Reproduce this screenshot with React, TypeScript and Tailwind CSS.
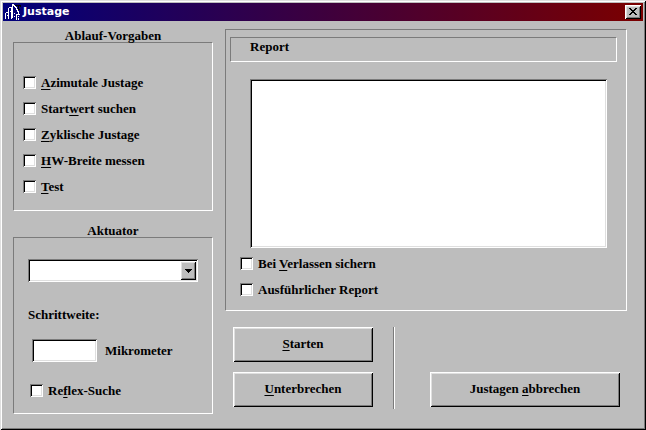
import { useState, type ReactNode } from "react";

const sunken =
  "bg-white shadow-[inset_1px_1px_#7b7b7b,inset_-1px_-1px_#fff,inset_2px_2px_#000,inset_-2px_-2px_#dfdfdf]";
const raised =
  "bg-[#bdbdbd] shadow-[inset_1px_1px_#fff,inset_-1px_-1px_#000,inset_2px_2px_#dfdfdf,inset_-2px_-2px_#7b7b7b]";
const etched = "border border-t-[#7b7b7b] border-l-[#7b7b7b] border-r-white border-b-white";

// "&" marks the accelerator key, as in the dialog resources
function Caption({ text }: { text: string }) {
  const i = text.indexOf("&");
  if (i < 0) return <>{text}</>;
  return (
    <>
      {text.slice(0, i)}
      <u className="underline-offset-2">{text[i + 1]}</u>
      {text.slice(i + 2)}
    </>
  );
}

function Check({ text }: { text: string }) {
  return (
    <label className="flex items-center gap-[5px] h-[13px] leading-[13px] whitespace-nowrap">
      <input
        type="checkbox"
        className={`appearance-none shrink-0 w-[13px] h-[13px] checked:bg-black ${sunken}`}
      />
      <span>
        <Caption text={text} />
      </span>
    </label>
  );
}

function Group({ title, className, children }: { title: string; className: string; children: ReactNode }) {
  return (
    <section>
      <h2 className="leading-[13px] text-center">{title}</h2>
      <div className={`${etched} ${className}`}>{children}</div>
    </section>
  );
}

function PushButton({ text, className }: { text: string; className: string }) {
  return (
    <button type="button" className={`h-[35px] pb-0.5 leading-4 ${raised} ${className}`}>
      <Caption text={text} />
    </button>
  );
}

function AppIcon() {
  return (
    <svg width="17" height="18" viewBox="0 0 17 18" shapeRendering="crispEdges" fill="none" aria-hidden="true">
      <path d="M11 2.5h6M11.5 2v2M16.5 2v2M14 2v5M13 6.5h3" stroke="#000" />
      <path
        d="M1.5 16v-6M2 9.5h2M4.5 16V5M5 4.5h2M7.5 16V4M8.5 15V1M9.5 1v2M10.5 2v2M11.5 3v2M12.5 4v3M13.5 6v3M14.5 8v3M10.5 13v1M10.5 10v1M12.5 17v-6M13 11.5h3M14.5 13v1M14.5 15v2M3.5 12v1M6.5 8v1"
        stroke="#fff"
      />
    </svg>
  );
}

const OPTIONS = [
  "&Azimutale Justage",
  "Start&wert suchen",
  "&Zyklische Justage",
  "&HW-Breite messen",
  "&Test",
];

export default function App() {
  const [step, setStep] = useState("");
  const [report, setReport] = useState("");

  return (
    <div className="min-h-screen p-[3px] pb-4 bg-[#bdbdbd] text-black text-[13px] font-bold font-['Liberation_Serif','Times_New_Roman',serif] shadow-[inset_1px_1px_#dfdfdf,inset_-1px_-1px_#000,inset_2px_2px_#fff,inset_-2px_-2px_#7b7b7b]">
      <header className="flex items-center h-[18px] pl-px pr-0.5 bg-linear-to-r/srgb from-[#00007b] to-[#7b0000]">
        <AppIcon />
        <h1 className="ml-0.5 text-white text-[11px] leading-4 font-['DejaVu_Sans',Verdana,sans-serif]">
          Justage
        </h1>
        <button
          type="button"
          aria-label="Schließen"
          className={`ml-auto flex items-center justify-center w-4 h-[14px] pb-px ${raised}`}
        >
          <svg width="8" height="7" viewBox="0 0 8 7" shapeRendering="crispEdges" aria-hidden="true">
            <path d="M0 0h2v1h1v1h2V1h1V0h2v1H7v1H6v1H5v1h1v1h1v1h1v1H6V6H5V5H3v1H2v1H0V6h1V5h1V4h1V3H2V2H1V1H0z" />
          </svg>
        </button>
      </header>

      <main className="flex gap-3 pt-2 pl-2.5 pr-4">
        <div className="flex flex-col gap-[13px] w-[200px] shrink-0">
          <Group title="Ablauf-Vorgaben" className="flex flex-col gap-[13px] pt-[33px] pb-[17px] pl-[9px]">
            {OPTIONS.map((text) => (
              <Check key={text} text={text} />
            ))}
          </Group>

          <Group title="Aktuator" className="pt-[21px] pb-4 px-[14px]">
            <div className="relative">
              <select aria-label="Aktuator" className={`appearance-none block w-full h-[23px] px-1 ${sunken}`} />
              <span
                className={`absolute top-0.5 right-0.5 flex items-center justify-center w-4 h-[19px] pointer-events-none ${raised}`}
              >
                <svg width="7" height="4" viewBox="0 0 7 4" shapeRendering="crispEdges" aria-hidden="true">
                  <path d="M0 0h7v1H6v1H5v1H4v1H3V3H2V2H1V1H0z" />
                </svg>
              </span>
            </div>
            <label htmlFor="step" className="block mt-[25px] leading-4">
              Schrittweite:
            </label>
            <div className="flex items-center gap-2 mt-4 ml-1">
              <input
                id="step"
                value={step}
                onChange={(e) => setStep(e.target.value)}
                className={`w-[65px] h-[23px] px-1 ${sunken}`}
              />
              <span>Mikrometer</span>
            </div>
            <div className="mt-[22px] ml-0.5">
              <Check text="Re&flex-Suche" />
            </div>
          </Group>
        </div>

        <div className="flex-1">
          <section className={`pt-[7px] pb-[14px] ${etched}`}>
            <h2 className={`ml-1 mr-[9px] pt-px pb-1.5 pl-[19px] leading-4 ${etched}`}>Report</h2>
            <textarea
              aria-label="Report"
              value={report}
              onChange={(e) => setReport(e.target.value)}
              className={`block w-[calc(100%-43px)] h-[169px] mt-[17px] ml-6 p-1 resize-none ${sunken}`}
            />
            <div className="flex flex-col gap-[13px] mt-[9px] ml-[14px]">
              <Check text="Bei &Verlassen sichern" />
              <Check text="Ausführlicher Re&port" />
            </div>
          </section>

          <div className="flex mt-4 pl-2 pr-[7px]">
            <div className="flex flex-col gap-2.5 w-[140px]">
              <PushButton text="&Starten" className="w-full" />
              <PushButton text="&Unterbrechen" className="w-full" />
            </div>
            <div className="ml-5 h-[82px] border-l border-l-[#7b7b7b] border-r border-r-white" />
            <PushButton text="Justagen &abbrechen" className="ml-auto mb-0.5 self-end w-[190px]" />
          </div>
        </div>
      </main>
    </div>
  );
}
